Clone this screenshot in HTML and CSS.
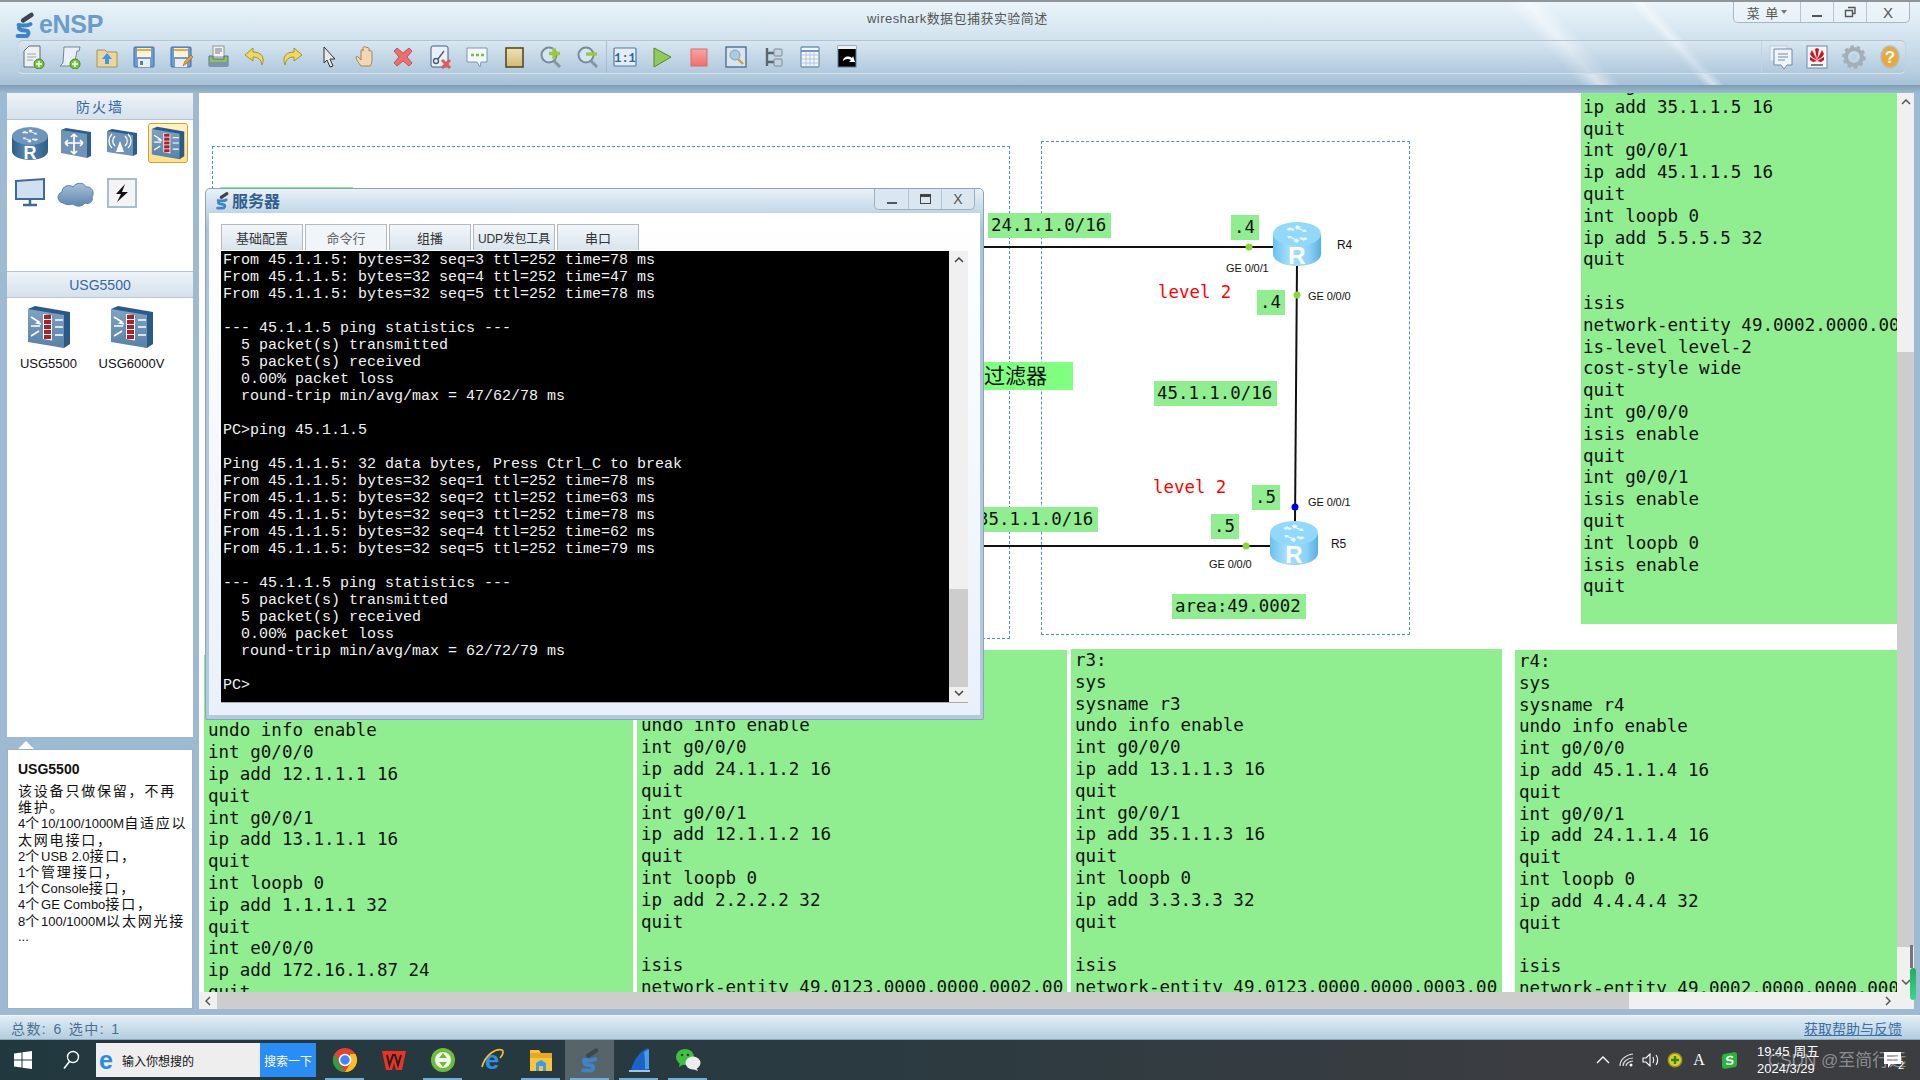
FILE: index.html
```html
<!DOCTYPE html>
<html lang="zh">
<head>
<meta charset="utf-8">
<title>eNSP</title>
<link rel="stylesheet" href="styles.css">
</head>
<body>
<svg class="defs" aria-hidden="true">
  <defs>
    <linearGradient id="gRouterLight" x1="0" x2="1" y1="0" y2="0"><stop offset="0" stop-color="#6cc0ee"/><stop offset=".35" stop-color="#a8e0fb"/><stop offset=".75" stop-color="#8ed2f6"/><stop offset="1" stop-color="#58aee4"/></linearGradient>
    <linearGradient id="gRouterDark" x1="0" x2="1" y1="0" y2="0"><stop offset="0" stop-color="#2c5c88"/><stop offset=".4" stop-color="#5a88b0"/><stop offset="1" stop-color="#2d5f8c"/></linearGradient>
    <linearGradient id="gFront" x1="0" x2="0" y1="0" y2="1"><stop offset="0" stop-color="#7fa2c2"/><stop offset="1" stop-color="#5781a8"/></linearGradient>
    <linearGradient id="gCloud" x1="0" x2="0" y1="0" y2="1"><stop offset="0" stop-color="#a8bfd8"/><stop offset="1" stop-color="#5d86b0"/></linearGradient>
    <linearGradient id="gStop" x1="0" x2="0" y1="0" y2="1"><stop offset="0" stop-color="#f9a3a3"/><stop offset="1" stop-color="#ee6f6f"/></linearGradient>
    <linearGradient id="gBook" x1="0" x2="0" y1="0" y2="1"><stop offset="0" stop-color="#efe2b4"/><stop offset="1" stop-color="#cfba78"/></linearGradient>
    <g id="arrows4"><path d="M24 3l4 2-2 1 5 2 1-1 2 3-5 0 1-1-5-2-1 1-2-3zM24 21l-4-2 2-1-5-2-1 1-2-3 5 0-1 1 5 2 1-1 2 3zM13 7l5-2 0 1 4 1-2 2-3-1-1 1zM35 17l-5 2 0-1-4-1 2-2 3 1 1-1z" fill="#fff"/></g>
    <symbol id="routerLight" viewBox="0 0 48 44">
      <path d="M0 12v20c0 7 11 12 24 12s24-5 24-12V12z" fill="url(#gRouterLight)"/>
      <ellipse cx="24" cy="12" rx="24" ry="12" fill="#92d8fb"/>
      <use href="#arrows4" opacity=".75"/>
      <text x="24" y="42" text-anchor="middle" class="svg-r">R</text>
    </symbol>
    <symbol id="routerDark" viewBox="0 0 48 44">
      <path d="M0 12v20c0 7 11 12 24 12s24-5 24-12V12z" fill="url(#gRouterDark)"/>
      <ellipse cx="24" cy="12" rx="24" ry="12" fill="#6f96ba"/>
      <use href="#arrows4" opacity=".85"/>
      <text x="24" y="42" text-anchor="middle" class="svg-r">R</text>
    </symbol>
    <symbol id="firewall" viewBox="0 0 44 44">
      <path d="M1 4l7-3 35 6v32l-6 4z" fill="#2b5a88"/>
      <path d="M1 4l36 6v33L1 37z" fill="url(#gFront)"/>
      <path d="M16 9l9 1.500v25L16 34z" fill="#fff"/>
      <path d="M17 10h7v4h-7zM17 15h7v4h-7zM17 20h7v4h-7zM17 25h7v4h-7zM17 30h7v4h-7z" fill="#a8242c"/>
      <path d="M4 12l8 5-2 1 4 1M4 21h9M4 31l8-5M28 15h8M28 22h8M28 30h8" stroke="#fff" stroke-width="1.600" fill="none"/>
    </symbol>
    <symbol id="ensp" viewBox="0 0 24 30">
      <path d="M10 10l9-6" stroke="#3d4650" stroke-width="5" stroke-linecap="round"/>
      <path d="M5 15c6 1 10 1 13-1M6 16c-2 4 2 5 6 5s5 3 2 6M4 27h8" stroke="#3d85c8" stroke-width="4.400" fill="none" stroke-linecap="round"/>
    </symbol>
  </defs>
</svg>

<div class="app">
  <header class="head">
    <div class="titlebar">
      <div class="logo"><svg class="logo-icon"><use href="#ensp"/></svg><span>eNSP</span></div>
      <div class="doc-title">wireshark数据包捕获实验简述</div>
      <div class="winctl">
        <div class="winbtn menu">菜 单<i class="caret"></i></div>
        <div class="winbtn min"><i class="dash"></i></div>
        <div class="winbtn"><svg width="12" height="12" viewBox="0 0 12 12"><path d="M4 1.500h7v6H9M1.500 4.500h7v6h-7z" fill="none" stroke="#555" stroke-width="1.400"/></svg></div>
        <div class="winbtn close">X</div>
      </div>
    </div>
    <div class="toolbars">
      <div class="tools">
        <div class="tool"><svg viewBox="0 0 24 24"><path d="M3 6l5-5h11v21H3z" fill="#eef1f4" stroke="#5c6b7c"/><path d="M6 9h9M6 12h9M6 15h6" stroke="#9aa6b2"/><circle cx="18" cy="19" r="5" fill="#7ec13c" stroke="#3f8a1c"/><path d="M18 16v6M15 19h6" stroke="#fff" stroke-width="1.400"/></svg></div>
        <div class="tool"><svg viewBox="0 0 24 24"><path d="M6 2h16l-1 4h-2l-3 15H2l3-3z" fill="#eaf0f6" stroke="#6f88a0"/><circle cx="17" cy="19" r="5" fill="#7ec13c" stroke="#3f8a1c"/><path d="M17 16v6M14 19h6" stroke="#fff" stroke-width="1.400"/></svg></div>
        <div class="tool"><svg viewBox="0 0 24 24"><path d="M2 5h8l2 2h10v15H2z" fill="#e8d7a0" stroke="#a9925a"/><path d="M12 8l5 6h-3v5h-4v-5H7z" fill="#4a94df"/></svg></div>
        <div class="tool"><svg viewBox="0 0 24 24"><rect x="2" y="2" width="20" height="20" rx="1" fill="#6f9bd0" stroke="#3e6da6"/><rect x="5" y="3" width="14" height="9" fill="#fdf3d8"/><path d="M5 5h14" stroke="#f2a83f" stroke-width="2"/><rect x="6" y="14" width="12" height="8" fill="#e8edf2"/><rect x="8" y="16" width="3" height="4" fill="#6a7a8a"/></svg></div>
        <div class="tool"><svg viewBox="0 0 24 24"><rect x="2" y="2" width="20" height="20" rx="1" fill="#6f9bd0" stroke="#3e6da6"/><rect x="5" y="3" width="14" height="9" fill="#fdf3d8"/><path d="M5 5h14" stroke="#f2a83f" stroke-width="2"/><rect x="6" y="14" width="12" height="8" fill="#e8edf2"/><path d="M14 21l2-5 6-6 2 2-6 6z" fill="#f0a030" stroke="#a05a10" stroke-width=".6"/></svg></div>
        <div class="tool"><svg viewBox="0 0 24 24"><rect x="7" y="1" width="11" height="11" fill="#f2f2ee" stroke="#8a949e"/><path d="M9 4h7M9 6h7M9 8h5" stroke="#777"/><path d="M3 11h4v3h11v-3h4v10H3z" fill="#8fc05a" stroke="#58708a"/><rect x="3" y="17" width="19" height="5" rx="1" fill="#7e94aa"/></svg></div>
        <div class="tool"><svg viewBox="0 0 24 24"><path d="M10 3L2 10l8 6v-4c5 0 8 2 9 8 3-7 0-13-9-13z" fill="#edd866" stroke="#a69224"/></svg></div>
        <div class="tool"><svg viewBox="0 0 24 24"><path d="M14 3l8 7-8 6v-4c-5 0-8 2-9 8-3-7 0-13 9-13z" fill="#edd866" stroke="#a69224"/></svg></div>
        <div class="tool"><svg viewBox="0 0 24 24"><path d="M7 2l11 12-5 0 3 7-3 1-3-7-3 3z" fill="#e8e8e8" stroke="#333"/></svg></div>
        <div class="tool"><svg viewBox="0 0 24 24"><path d="M7 21c-2-3-5-6-5-9 0-1 2-1 3 1l2 2V6c0-2 2-2 2 0V3c0-2 3-2 3 0v0c0-1 3-1 3 1v2c1-1 3 0 3 1v8c0 3-1 5-2 6z" fill="#f2d7b2" stroke="#a8825a"/></svg></div>
        <div class="tool"><svg viewBox="0 0 24 24"><path d="M6 3l6 5 6-5 3 3-5 6 5 6-3 3-6-5-6 5-3-3 5-6-5-6z" fill="#e87070" stroke="#c95050"/></svg></div>
        <div class="tool"><svg viewBox="0 0 24 24"><rect x="3" y="1" width="17" height="21" rx="2" fill="#eaf0f6" stroke="#44607e"/><circle cx="8" cy="16" r="2.500" fill="none" stroke="#44607e" stroke-width="1.400"/><path d="M10 14l6-8" stroke="#44607e" stroke-width="1.400"/><path d="M14 15l8 8M22 15l-8 8" stroke="#e05a5a" stroke-width="3"/></svg></div>
        <div class="tool"><svg viewBox="0 0 24 24"><path d="M2 3h20v14h-6l-1 5-3-5H2z" fill="#f3f7fb" stroke="#7f97ad"/><path d="M6 10h3M11 10h3M16 10h3" stroke="#7dbb3c" stroke-width="2.400"/></svg></div>
        <div class="tool"><svg viewBox="0 0 24 24"><rect x="4" y="3" width="17" height="19" fill="url(#gBook)" stroke="#5a4a20" stroke-width="1.600"/></svg></div>
        <div class="tool"><svg viewBox="0 0 24 24"><circle cx="10" cy="10" r="7.500" fill="#d4e6f6" stroke="#7a8a9a" stroke-width="2"/><path d="M15 16l6 6" stroke="#8a949e" stroke-width="3"/><path d="M15 3v11M10 8.500h11" stroke="#9cc93a" stroke-width="3.400"/></svg></div>
        <div class="tool"><svg viewBox="0 0 24 24"><circle cx="10" cy="10" r="7.500" fill="#d4e6f6" stroke="#7a8a9a" stroke-width="2"/><path d="M15 16l6 6" stroke="#8a949e" stroke-width="3"/><path d="M10 9h11" stroke="#9cc93a" stroke-width="3.400"/></svg></div>
        <div class="tb-sep"></div>
        <div class="tool"><svg viewBox="0 0 24 24"><rect x="1" y="3" width="22" height="18" rx="1" fill="#e4edf6" stroke="#4f7cab" stroke-width="1.200"/><text x="12" y="17" text-anchor="middle" class="svg-ratio">1:1</text></svg></div>
        <div class="tool"><svg viewBox="0 0 24 24"><path d="M4 3l17 9L4 22z" fill="#93c95c" stroke="#4f8a2a"/></svg></div>
        <div class="tool"><svg viewBox="0 0 24 24"><rect x="4" y="4" width="16" height="17" fill="url(#gStop)" stroke="#d86a6a"/></svg></div>
        <div class="tool"><svg viewBox="0 0 24 24"><rect x="2" y="2" width="20" height="20" fill="#dbe5ef" stroke="#50708f" stroke-width="1.400"/><circle cx="11" cy="10" r="5" fill="#a9cbe6" stroke="#8aa0b4"/><path d="M14 14l5 5" stroke="#c9a04a" stroke-width="2.400"/></svg></div>
        <div class="tool"><svg viewBox="0 0 24 24"><path d="M6 3v18M6 8h7M6 17h7" stroke="#5c6670" stroke-width="2.400" fill="none"/><rect x="13" y="4" width="8" height="7" rx="1" fill="#c8d2dc" stroke="#7a8a9a"/><rect x="13" y="14" width="8" height="7" rx="1" fill="#c8d2dc" stroke="#7a8a9a"/></svg></div>
        <div class="tool"><svg viewBox="0 0 24 24"><rect x="3" y="2" width="18" height="20" rx="1" fill="#f2f6fa" stroke="#6f94bb" stroke-width="1.300"/><path d="M3 6h18" stroke="#6f94bb" stroke-width="2"/><path d="M3 10h18M3 14h18M3 18h18M8 6v16M12 6v16M16 6v16" stroke="#a6bdd4" stroke-width=".8"/></svg></div>
        <div class="tool"><svg viewBox="0 0 24 24"><rect x="3" y="1" width="18" height="21" fill="#000" stroke="#5a7ea3"/><path d="M3 1h18v3H3z" fill="#eee"/><path d="M8 16c0-4 5-6 9-3l1-2 2 6-6 0 2-2c-3-2-6-1-8 1z" fill="#fff"/></svg></div>
      </div>
      <div class="tools-right">
        <div class="tool"><svg viewBox="0 0 24 24"><rect x="1" y="1" width="17" height="15" fill="#e8eff6" stroke="#c0cedb"/><path d="M5 4h18v16h-5l-3 4-3-4H5z" fill="#f0f5fa" stroke="#6e8aa6"/><path d="M9 9h10M9 12h10M9 15h7" stroke="#6e8aa6"/></svg></div>
        <div class="tool"><svg viewBox="0 0 24 24"><rect x="2" y="1" width="20" height="22" fill="#f4f6f8" stroke="#6e8aa6"/><path d="M12 15L7 5l-2 4 2 3zM12 15l-2-11 2-1 2 1zM12 15l5-10 2 4-2 3zM12 16l-7-4v3l3 2zM12 16l7-4v3l-3 2z" fill="#d4121e"/><path d="M6 20h12" stroke="#555" stroke-width="1.500"/></svg></div>
        <div class="tool"><svg viewBox="0 0 24 24"><circle cx="12" cy="12" r="8" fill="none" stroke="#a4aeb8" stroke-width="4"/><circle cx="12" cy="12" r="10.500" fill="none" stroke="#a4aeb8" stroke-width="2.500" stroke-dasharray="3.500 3"/><circle cx="12" cy="12" r="3" fill="#bcd2e4"/></svg></div>
        <div class="tool"><svg viewBox="0 0 24 24"><ellipse cx="12" cy="12" rx="9" ry="11" fill="#e8a83a" stroke="#b8bcc0" stroke-width="1.500"/><text x="12" y="18" text-anchor="middle" class="svg-help">?</text></svg></div>
      </div>
    </div>
  </header>

  <main class="workspace">
    <aside class="side">
      <section class="palette">
        <h2 class="pal-head cjk-head">防火墙</h2>
        <div class="pal-grid">
          <div class="pal-item"><svg class="ico-router"><use href="#routerDark"/></svg></div>
          <div class="pal-item"><svg class="ico-box" viewBox="0 0 32 32"><path d="M1 3l5-2 25 4v24l-4 2z" fill="#2d5e8c"/><path d="M1 3l26 4v24L1 26z" fill="#6f94b8"/><path d="M14 7v20M5 16h18M14 7l-3 3M14 7l3 3M14 27l-3-3M14 27l3-3M5 16l3-3M5 16l3 3M23 16l-3-3M23 16l-3 3" stroke="#fff" stroke-width="1.700" fill="none"/></svg></div>
          <div class="pal-item"><svg class="ico-box" viewBox="0 0 32 32"><path d="M1 4l5-2 25 4v21l-4 2z" fill="#2d5e8c"/><path d="M1 4l26 4v21L1 25z" fill="#6f94b8"/><path d="M14 14l-4 11h8z" fill="#fff"/><path d="M9 9c-3 3-3 7 0 10M19 9c3 3 3 7 0 10M6 7c-4 4-4 10 0 14M22 7c4 4 4 10 0 14" stroke="#fff" stroke-width="1.300" fill="none"/></svg></div>
          <div class="pal-item selected"><svg class="ico-fw-sm"><use href="#firewall"/></svg></div>
          <div class="pal-item"><svg class="ico-box" viewBox="0 0 32 32"><path d="M2 4l28-2v20H2z" fill="#cfe0f0" stroke="#3f6a94" stroke-width="2"/><path d="M16 22v5M9 28h14" stroke="#3f6a94" stroke-width="2.500"/></svg></div>
          <div class="pal-item"><svg class="ico-cloud" viewBox="0 0 38 30"><path d="M6 25c-6-1-7-9-1-11 0-6 7-8 11-5 3-5 11-5 13 0 6-1 9 6 6 10 2 4-3 8-7 6-3 4-9 4-12 1-3 1-7 1-10-1z" fill="url(#gCloud)" stroke="#5d86b0"/></svg></div>
          <div class="pal-item"><svg class="ico-bolt" viewBox="0 0 30 30"><rect x="1" y="1" width="28" height="28" fill="#f2f4f6" stroke="#a7bdd0" stroke-width="2"/><path d="M18 6l-9 10h5l-4 8 11-10h-6z" fill="#111"/></svg></div>
        </div>
        <h2 class="pal-head latin-head">USG5500</h2>
        <div class="devices">
          <div class="device"><svg class="ico-fw"><use href="#firewall"/></svg><span>USG5500</span></div>
          <div class="device"><svg class="ico-fw"><use href="#firewall"/></svg><span>USG6000V</span></div>
        </div>
      </section>
      <section class="info">
        <h3>USG5500</h3>
        <p><span class="c">该设备只做保留，不再</span></p>
        <p><span class="c">维护。</span></p>
        <p>4<span class="c">个</span>10/100/1000M<span class="c">自适应以</span></p>
        <p><span class="c">太网电接口，</span></p>
        <p>2<span class="c">个</span>USB 2.0<span class="c">接口，</span></p>
        <p>1<span class="c">个管理接口，</span></p>
        <p>1<span class="c">个</span>Console<span class="c">接口，</span></p>
        <p>4<span class="c">个</span>GE Combo<span class="c">接口，</span></p>
        <p>8<span class="c">个</span>100/1000M<span class="c">以太网光接</span></p>
        <p>...</p>
      </section>
    </aside>

    <section class="canvas">
      <div class="scene">
        <div class="area area-left"></div>
        <div class="area area-right"></div>
        <div class="note stub"></div>

        <svg class="links" viewBox="0 0 1715 899">
          <path d="M700 154H1098" class="link"/>
          <path d="M700 453H1090" class="link"/>
          <path d="M1098 170L1096 430" class="link"/>
          <circle cx="1050" cy="154" r="3.500" fill="#8cd63a"/>
          <circle cx="1098" cy="202" r="3.500" fill="#8cd63a"/>
          <circle cx="1096" cy="414" r="3.500" fill="#0000e8"/>
          <circle cx="1047" cy="453" r="3.500" fill="#8cd63a"/>
        </svg>
        <svg class="node r4"><use href="#routerLight"/></svg>
        <svg class="node r5"><use href="#routerLight"/></svg>

        <span class="port p1">GE 0/0/1</span>
        <span class="port p2">GE 0/0/0</span>
        <span class="port p3">GE 0/0/1</span>
        <span class="port p4">GE 0/0/0</span>
        <span class="port name n4">R4</span>
        <span class="port name n5">R5</span>

        <div class="note t-241">24.1.1.0/16</div>
        <div class="note t-d4a">.4</div>
        <div class="note t-d4b">.4</div>
        <div class="note t-451">45.1.1.0/16</div>
        <div class="note t-351">35.1.1.0/16</div>
        <div class="note t-d5a">.5</div>
        <div class="note t-d5b">.5</div>
        <div class="note t-area">area:49.0002</div>
        <div class="note t-filter">过滤器</div>
        <div class="lvl l1">level 2</div>
        <div class="lvl l2">level 2</div>

        <pre class="cfg cfg-r1">r1:
sys
sysname r1
undo info enable
int g0/0/0
ip add 12.1.1.1 16
quit
int g0/0/1
ip add 13.1.1.1 16
quit
int loopb 0
ip add 1.1.1.1 32
quit
int e0/0/0
ip add 172.16.1.87 24
quit</pre>
        <pre class="cfg cfg-r2">r2:
sys
sysname r2
undo info enable
int g0/0/0
ip add 24.1.1.2 16
quit
int g0/0/1
ip add 12.1.1.2 16
quit
int loopb 0
ip add 2.2.2.2 32
quit

isis
network-entity 49.0123.0000.0000.0002.00</pre>
        <pre class="cfg cfg-r3">r3:
sys
sysname r3
undo info enable
int g0/0/0
ip add 13.1.1.3 16
quit
int g0/0/1
ip add 35.1.1.3 16
quit
int loopb 0
ip add 3.3.3.3 32
quit

isis
network-entity 49.0123.0000.0000.0003.00</pre>
        <pre class="cfg cfg-r4">r4:
sys
sysname r4
undo info enable
int g0/0/0
ip add 45.1.1.4 16
quit
int g0/0/1
ip add 24.1.1.4 16
quit
int loopb 0
ip add 4.4.4.4 32
quit

isis
network-entity 49.0002.0000.0000.0004.00</pre>
        <pre class="cfg cfg-r5">int g0/0/0
ip add 35.1.1.5 16
quit
int g0/0/1
ip add 45.1.1.5 16
quit
int loopb 0
ip add 5.5.5.5 32
quit

isis
network-entity 49.0002.0000.0000.0005.00
is-level level-2
cost-style wide
quit
int g0/0/0
isis enable
quit
int g0/0/1
isis enable
quit
int loopb 0
isis enable
quit</pre>

        <div class="dialog">
          <div class="dlg-title">
            <svg class="dlg-icon"><use href="#ensp"/></svg>
            <span class="dlg-name">服务器</span>
            <div class="dlg-ctl">
              <div class="dlg-btn"><i class="dash"></i></div>
              <div class="dlg-btn"><i class="maxi"></i></div>
              <div class="dlg-btn">X</div>
            </div>
          </div>
          <div class="dlg-body">
            <div class="tabs">
              <div class="tab">基础配置</div>
              <div class="tab active">命令行</div>
              <div class="tab">组播</div>
              <div class="tab udp">UDP发包工具</div>
              <div class="tab">串口</div>
            </div>
            <div class="term">
<pre class="term-text">From 45.1.1.5: bytes=32 seq=3 ttl=252 time=78 ms
From 45.1.1.5: bytes=32 seq=4 ttl=252 time=47 ms
From 45.1.1.5: bytes=32 seq=5 ttl=252 time=78 ms

--- 45.1.1.5 ping statistics ---
  5 packet(s) transmitted
  5 packet(s) received
  0.00% packet loss
  round-trip min/avg/max = 47/62/78 ms

PC&gt;ping 45.1.1.5

Ping 45.1.1.5: 32 data bytes, Press Ctrl_C to break
From 45.1.1.5: bytes=32 seq=1 ttl=252 time=78 ms
From 45.1.1.5: bytes=32 seq=2 ttl=252 time=63 ms
From 45.1.1.5: bytes=32 seq=3 ttl=252 time=78 ms
From 45.1.1.5: bytes=32 seq=4 ttl=252 time=62 ms
From 45.1.1.5: bytes=32 seq=5 ttl=252 time=79 ms

--- 45.1.1.5 ping statistics ---
  5 packet(s) transmitted
  5 packet(s) received
  0.00% packet loss
  round-trip min/avg/max = 62/72/79 ms

PC&gt;</pre>
              <div class="term-scroll">
                <svg class="arr" viewBox="0 0 10 6"><path d="M1 5l4-4 4 4" fill="none" stroke="#444" stroke-width="1.500"/></svg>
                <div class="term-track"><div class="term-thumb"></div></div>
                <svg class="arr" viewBox="0 0 10 6"><path d="M1 1l4 4 4-4" fill="none" stroke="#444" stroke-width="1.500"/></svg>
              </div>
            </div>
          </div>
        </div>
      </div>
      <div class="vscroll">
        <svg class="arr" viewBox="0 0 10 6"><path d="M1 5l4-4 4 4" fill="none" stroke="#555" stroke-width="1.500"/></svg>
        <div class="vthumb"></div>
        <svg class="arr" viewBox="0 0 10 6"><path d="M1 1l4 4 4-4" fill="none" stroke="#555" stroke-width="1.500"/></svg>
        <i class="vmark-dark"></i>
        <i class="vmark-green"></i>
      </div>
      <div class="hscroll">
        <svg class="arr-h" viewBox="0 0 6 10"><path d="M5 1L1 5l4 4" fill="none" stroke="#555" stroke-width="1.500"/></svg>
        <div class="hthumb"></div>
        <svg class="arr-h" viewBox="0 0 6 10"><path d="M1 1l4 4-4 4" fill="none" stroke="#555" stroke-width="1.500"/></svg>
      </div>
    </section>
  </main>

  <footer class="status">
    <span class="counts">总数: 6 选中: 1</span>
    <a class="help">获取帮助与反馈</a>
  </footer>
</div>

<div class="taskbar">
  <div class="tb-start"><svg width="18" height="18" viewBox="0 0 18 18"><path d="M0 2.500l7.500-1v7H0zM8.500 1.300L18 0v8.500H8.500zM0 9.500h7.500v7l-7.500-1zM8.500 9.500H18V18l-9.500-1.300z" fill="#fff"/></svg></div>
  <div class="tb-find"><svg width="18" height="20" viewBox="0 0 18 20"><circle cx="11" cy="7" r="5.500" fill="none" stroke="#fff" stroke-width="1.400"/><path d="M7.500 11.500L2 18.500" stroke="#fff" stroke-width="1.600"/></svg></div>
  <div class="search-box"><span class="ie-e">e</span><span>输入你想搜的</span></div>
  <div class="search-btn">搜索一下</div>
  <div class="apps">
    <div class="app-ico running"><svg viewBox="0 0 26 26"><circle cx="13" cy="13" r="12" fill="#e34234"/><path d="M2.600 7L8 18l5 7a12 12 0 0 1-10.400-18z" fill="#2f9e44"/><path d="M23.400 7a12 12 0 0 1-10.400 18l5-8 0-10z" fill="#f6c026"/><circle cx="13" cy="13" r="5.500" fill="#4285f4" stroke="#fff" stroke-width="1.500"/></svg></div>
    <div class="app-ico"><svg viewBox="0 0 26 26"><path d="M1 4h24l-4 19h-6l-2-7-2 7H5z" fill="#ea3323"/><path d="M6 8l2.500 10L12 8h2l3 10 3-10" fill="none" stroke="#222" stroke-width="2"/></svg></div>
    <div class="app-ico running"><svg viewBox="0 0 26 26"><circle cx="13" cy="13" r="12" fill="#6fbe3a"/><circle cx="13" cy="13" r="8" fill="#f4f8ec"/><path d="M9 11h8l-4-5zM9 15h8l-4 5z" fill="#6fbe3a"/></svg></div>
    <div class="app-ico"><svg viewBox="0 0 26 26"><text x="13" y="22" text-anchor="middle" class="svg-ie">e</text><path d="M3 20C6 8 17 1 23 3c2 1 1 5-2 8" fill="none" stroke="#f2c230" stroke-width="1.600"/></svg></div>
    <div class="app-ico running"><svg viewBox="0 0 26 26"><path d="M2 3h9l2 3h11v18H2z" fill="#f5c542"/><path d="M2 6h22v5H2z" fill="#e8a820"/><path d="M8 24v-8l5-3 5 3v8z" fill="#3f9be8"/><rect x="11" y="19" width="4" height="5" fill="#f5c542"/></svg></div>
    <div class="app-ico active"><svg viewBox="0 0 24 30"><use href="#ensp"/></svg></div>
    <div class="app-ico running"><svg viewBox="0 0 26 26"><path d="M5 23C8 12 14 4 22 1c1 8 1 15 1 22z" fill="#1b63c6"/><path d="M3 23h21v2H3z" fill="#9cc3e8"/><path d="M18 5c1 6 1 12 1 17h4V2z" fill="#4b9be8"/></svg></div>
    <div class="app-ico running"><svg viewBox="0 0 26 26"><ellipse cx="10" cy="10" rx="9" ry="8" fill="#3fc03f"/><path d="M5 15l-1 5 5-3z" fill="#3fc03f"/><ellipse cx="18" cy="16" rx="7.500" ry="6.500" fill="#ededed"/><path d="M21 20l2 4-5-2z" fill="#ededed"/><circle cx="7" cy="8" r="1.200" fill="#234"/><circle cx="13" cy="8" r="1.200" fill="#234"/></svg></div>
  </div>
  <div class="tray">
    <div class="tray-i"><svg width="14" height="10" viewBox="0 0 14 10"><path d="M1 8l6-6 6 6" fill="none" stroke="#fff" stroke-width="1.300"/></svg></div>
    <div class="tray-i"><svg width="16" height="14" viewBox="0 0 16 14"><path d="M1 13C1 7 6 2 14 1M4 13C4 9 8 5 14 5M7 13c0-2 3-5 7-5" fill="none" stroke="#ddd" stroke-width="1.200"/><circle cx="12" cy="12" r="1.500" fill="#fff"/></svg></div>
    <div class="tray-i"><svg width="18" height="14" viewBox="0 0 18 14"><path d="M1 5h3l4-4v12l-4-4H1z" fill="none" stroke="#fff" stroke-width="1.100"/><path d="M11 4c1 2 1 4 0 6M14 2c2 3 2 7 0 10" fill="none" stroke="#fff" stroke-width="1.100"/></svg></div>
    <div class="tray-i"><svg width="16" height="16" viewBox="0 0 16 16"><circle cx="8" cy="8" r="7.500" fill="#8a9a20"/><circle cx="8" cy="8" r="6" fill="#f3c71e"/><path d="M8 4v8M4 8h8" stroke="#1f8a2a" stroke-width="2.400"/></svg></div>
    <div class="tray-i tray-a">A</div>
    <div class="tray-i tray-s"><span>S</span></div>
  </div>
  <div class="clock"><div>19:45 周五</div><div>2024/3/29</div></div>
  <div class="notif"><svg width="18" height="16" viewBox="0 0 18 16"><path d="M0 0h17v12H7l-3 4v-4H0z" fill="#fff"/><path d="M3 4h11M3 8h11" stroke="#555"/></svg><span class="badge">2</span></div>
  <div class="watermark">CSDN @至简行远</div>
</div>
</body>
</html>
```

FILE: styles.css
```css
* { box-sizing: border-box; }
html, body { margin: 0; height: 100%; overflow: hidden; }
body { width: 1920px; height: 1080px; font-family: "Liberation Sans", "Noto Sans CJK SC", sans-serif; background: #2a3a40; }
.defs { position: absolute; width: 0; height: 0; }
.svg-r { font: 700 24px "Liberation Sans", sans-serif; fill: #fff; }
.svg-ratio { font: 700 12px "Liberation Mono", monospace; fill: #2f6aa3; }
.svg-help { font: 700 17px "Liberation Sans", sans-serif; fill: #fff; }
.svg-ie { font: 700 26px "Liberation Sans", sans-serif; fill: #2f8fe0; }

.app { height: 1040px; display: flex; flex-direction: column; background: #9fbad2; }

/* header */
.head { height: 85px; position: relative; overflow: hidden; background: linear-gradient(#eaf4f9 0%, #d5e5f0 38%, #b7cee0 85%, #a6c0d6 100%); border-top: 2px solid #8e959b; flex: none; }
.head::before, .head::after { content: ""; position: absolute; top: 0; height: 90px; transform: skewX(42deg); transform-origin: top; background: linear-gradient(90deg, rgba(255,255,255,0), rgba(255,255,255,.5), rgba(255,255,255,0)); }
.head::before { left: 1505px; width: 42px; }
.head::after { left: 1628px; width: 22px; }
.titlebar { height: 36px; display: flex; align-items: flex-start; position: relative; z-index: 1; }
.logo { display: flex; align-items: center; width: 300px; padding: 9px 0 0 14px; color: #6c9cc9; font-weight: 700; font-size: 25px; letter-spacing: -.3px; height: 36px; }
.logo-icon { width: 22px; height: 28px; margin-right: 3px; }
.doc-title { position: absolute; left: 867px; top: 9px; font-size: 13px; color: #555; line-height: 16px; letter-spacing: .45px; }
.winctl { margin-left: auto; margin-right: 10px; display: flex; height: 21px; border: 1px solid #a8b6c2; border-top: 0; border-radius: 0 0 5px 5px; background: rgba(240,246,250,.55); }
.winbtn { width: 33px; display: flex; align-items: center; justify-content: center; font-size: 13px; color: #555; border-left: 1px solid #b8c6d2; }
.winbtn.menu { width: 66px; border-left: 0; letter-spacing: 1px; }
.winbtn.close { width: 43px; font-size: 15px; }
.caret { width: 0; height: 0; border: 3px solid transparent; border-top: 4px solid #777; border-bottom: 0; margin-left: 2px; }
.dash { display: block; width: 10px; height: 2px; background: #555; margin-top: 8px; }
.toolbars { display: flex; height: 34px; margin: 2px 14px 0 17px; position: relative; z-index: 1; border: 1px solid #c3d4e1; border-top-color: #b4c4d2; border-bottom-color: #d6e2ec; border-radius: 6px; background: linear-gradient(rgba(235,243,248,.35), rgba(170,195,218,.45)); }
.tools { display: flex; align-items: center; gap: 7px; flex: 1; }
.tool { width: 30px; height: 26px; display: flex; align-items: center; justify-content: center; }
.tool svg { width: 24px; height: 24px; }
.tb-sep { width: 1px; height: 32px; margin: 0 -4px; background: #a9bccd; }
.tools-right { width: 144px; display: flex; align-items: center; gap: 7px; padding-left: 4px; border-left: 1px solid #c3d4e1; }

/* workspace */
.workspace { height: 930px; flex: none; display: flex; gap: 6px; padding: 8px 6px 6px 7px; background: linear-gradient(#7f9cb6 0, #9dbad2 8px); }
.side { width: 186px; flex: none; display: flex; flex-direction: column; gap: 12px; position: relative; }
.palette { height: 644px; background: #fff; }
.pal-head { margin: 0; height: 27px; display: flex; align-items: center; justify-content: center; font-weight: 400; color: #3568a0; background: linear-gradient(#eef3f8, #d5e1ec); border-bottom: 1px solid #b4c4d2; }
.cjk-head { font-size: 14px; letter-spacing: 2px; }
.latin-head { font-size: 14px; border-top: 1px solid #b4c4d2; }
.pal-grid { height: 151px; display: grid; grid-template-columns: repeat(4, 46px); grid-auto-rows: 40px; row-gap: 10px; padding-top: 3px; align-content: start; }
.pal-item { width: 40px; height: 40px; justify-self: center; display: flex; align-items: center; justify-content: center; border: 1px solid transparent; border-radius: 3px; }
.pal-item.selected { background: linear-gradient(#fff4c8, #ffe08a); border-color: #d6a030; }
.ico-router { width: 36px; height: 33px; }
.ico-box { width: 32px; height: 32px; }
.ico-cloud { width: 38px; height: 30px; }
.ico-bolt { width: 30px; height: 30px; }
.ico-fw-sm { width: 34px; height: 34px; }
.ico-fw { width: 44px; height: 44px; }
.devices { display: flex; padding-top: 7px; }
.device { width: 83px; display: flex; flex-direction: column; align-items: center; font-size: 13px; color: #111; gap: 7px; }
.info { flex: 1; background: #fff; padding: 10px 4px 0 10px; position: relative; border: 1px solid #9fb2c3; }
.info::before { content: ""; position: absolute; left: 10px; top: -9px; width: 0; height: 0; border: 8px solid transparent; border-bottom: 8px solid #fff; border-top: 0; }
.info h3 { margin: 0 0 5px; font-size: 14px; line-height: 18px; font-weight: 700; color: #111; }
.info p { margin: 0; font-size: 13px; line-height: 16px; height: 16.200px; color: #111; white-space: nowrap; }
.c { font-size: 14px; letter-spacing: 1.800px; }

/* canvas */
.canvas { flex: 1; display: grid; grid-template-columns: 1fr 17px; grid-template-rows: 1fr 17px; background: #fff; }
.scene { position: relative; overflow: hidden; background: #fff; }
.area { position: absolute; border: 1px dashed #4a90e2; }
.area-left { left: 13px; top: 53px; width: 798px; height: 493px; }
.area-right { left: 842px; top: 48px; width: 369px; height: 494px; }
.links { position: absolute; left: 0; top: 0; width: 1715px; height: 899px; }
.link { stroke: #111; stroke-width: 2; fill: none; }
.node { position: absolute; width: 48px; height: 44px; }
.r4 { left: 1074px; top: 129px; }
.r5 { left: 1071px; top: 428px; }
.port { position: absolute; font-size: 11px; line-height: 14px; color: #111; letter-spacing: -.1px; white-space: nowrap; }
.p1 { left: 1027px; top: 168px; }
.p2 { left: 1109px; top: 196px; }
.p3 { left: 1109px; top: 402px; }
.p4 { left: 1010px; top: 464px; }
.name { font-size: 12px; }
.n4 { left: 1138px; top: 145px; }
.n5 { left: 1132px; top: 444px; }
.note { position: absolute; height: 25px; line-height: 24px; padding-left: 3px; background: #90ee90; font: 17.400px/24px "DejaVu Sans Mono", monospace; color: #111; white-space: nowrap; }
.stub { left: 21px; top: 94px; width: 133px; height: 3px; }
.t-241 { left: 789px; top: 120px; width: 123px; }
.t-d4a { left: 1032px; top: 122px; width: 28px; }
.t-d4b { left: 1058px; top: 197px; width: 28px; }
.t-451 { left: 955px; top: 288px; width: 123px; }
.t-351 { left: 776px; top: 414px; width: 123px; }
.t-d5a { left: 1053px; top: 392px; width: 28px; }
.t-d5b { left: 1012px; top: 421px; width: 28px; }
.t-area { left: 973px; top: 501px; width: 134px; }
.t-filter { left: 770px; top: 269px; width: 104px; height: 28px; padding-left: 15px; background: #80ff80; font: 21px/24px "Noto Sans CJK SC", sans-serif; }
.lvl { position: absolute; font: 17.400px/22px "DejaVu Sans Mono", monospace; color: #f00; white-space: nowrap; }
.l1 { left: 959px; top: 188px; }
.l2 { left: 954px; top: 383px; }
.cfg { position: absolute; margin: 0; overflow: hidden; background: #90ee90; color: #111; font: 17.550px/21.800px "DejaVu Sans Mono", monospace; white-space: pre; padding-left: 4px; }
.cfg-r1 { left: 5px; top: 562px; width: 429px; height: 400px; }
.cfg-r2 { left: 438px; top: 557px; width: 430px; height: 400px; }
.cfg-r3 { left: 872px; top: 556px; width: 431px; height: 400px; padding-top: 1px; }
.cfg-r4 { left: 1316px; top: 557px; width: 382px; height: 400px; padding-top: 1px; }
.cfg-r5 { left: 1382px; top: -18px; width: 316px; height: 549px; padding-left: 2px; }

/* dialog */
.dialog { position: absolute; left: 6px; top: 95px; width: 779px; height: 532px; display: flex; flex-direction: column; padding: 0 3px 4px; background: linear-gradient(#e8f1f8, #a9c3da 40px, #b3cbe0); border: 1px solid #8ea3b5; border-radius: 5px 5px 2px 2px; }
.dlg-title { height: 24px; display: flex; align-items: center; flex: none; }
.dlg-icon { width: 15px; height: 19px; margin: 0 2px 2px 6px; }
.dlg-name { font-size: 16px; color: #2f5f90; font-weight: 700; margin-bottom: 2px; }
.dlg-ctl { margin-left: auto; margin-right: 5px; align-self: flex-start; display: flex; height: 21px; border: 1px solid #9db0c0; border-top: 0; border-radius: 0 0 5px 5px; background: #dbe7f0; }
.dlg-btn { width: 33px; display: flex; align-items: center; justify-content: center; font-size: 14px; color: #555; border-left: 1px solid #b4c4d2; }
.dlg-btn:first-child { border-left: 0; }
.maxi { width: 11px; height: 10px; border: 1px solid #444; border-top-width: 3px; }
.dlg-body { flex: 1; background: linear-gradient(#fff, #eaf0fb); padding: 11px 12px 0 12px; display: flex; flex-direction: column; }
.tabs { display: flex; gap: 2px; height: 26px; flex: none; }
.tab { width: 82px; display: flex; align-items: center; justify-content: center; font-size: 13px; color: #333; background: linear-gradient(#f2f6fa, #d9e4ee); border: 1px solid #b4b9bd; border-bottom: 0; padding-bottom: 1px; }
.tab.active { background: #f0f5f9; color: #666; }
.tab.udp { font-size: 12px; letter-spacing: -.2px; }
.term { flex: none; height: 452px; margin-top: 1px; display: flex; background: #000; border-bottom: 1px solid #aaa; }
.term-text { flex: 1; margin: 0; padding: 1px 0 0 2px; color: #f2f2f2; font: 15px/17px "Liberation Mono", monospace; overflow: hidden; }
.term-scroll { width: 19px; display: flex; flex-direction: column; align-items: center; background: #f0f0f0; }
.term-track { flex: 1; width: 100%; display: flex; flex-direction: column; justify-content: flex-end; }
.term-thumb { height: 98px; background: #cdcdcd; margin-bottom: -3px; }
.arr { width: 10px; height: 6px; margin: 6px 0; flex: none; }
.arr-h { width: 6px; height: 10px; margin: 0 6px; flex: none; }

.vscroll { grid-row: 1 / 3; grid-column: 2; position: relative; display: flex; flex-direction: column; align-items: center; background: #f0f0f0; }
.vthumb { width: 100%; height: 595px; margin-top: 241px; background: #cdcdcd; }
.vthumb + .arr { margin-top: auto; margin-bottom: 24px; }
.vmark-dark { position: absolute; left: 13px; top: 852px; width: 3px; height: 23px; background: #777; }
.vmark-green { position: absolute; left: 13px; top: 875px; width: 6px; height: 32px; border-radius: 3px; background: linear-gradient(#1fae5c, #39d98a); }
.hscroll { grid-row: 2; grid-column: 1; display: flex; align-items: center; background: #f0f0f0; }
.hthumb { width: 1412px; height: 100%; background: #cdcdcd; margin-right: auto; }

/* status */
.status { flex: 1; display: flex; align-items: center; justify-content: space-between; padding: 0 18px 0 11px; background: linear-gradient(#e1edf5, #b3cde0); border-top: 1px solid #f0f6fa; border-bottom: 1px solid #8fa5b6; font-size: 14px; }
.counts { color: #4a6f92; letter-spacing: 1.400px; word-spacing: 1px; }
.help { color: #3a6ea5; text-decoration: underline; }

/* taskbar */
.taskbar { height: 40px; position: relative; display: flex; align-items: center; background: linear-gradient(90deg, #22383f, #2a3a40 45%, #3b3d41 80%); color: #fff; }
.tb-start { width: 46px; display: flex; justify-content: center; }
.tb-find { width: 50px; display: flex; justify-content: center; }
.search-box { width: 164px; height: 34px; display: flex; align-items: center; gap: 6px; padding-left: 3px; background: #eee; color: #111; font-size: 12px; }
.ie-e { font: 700 25px/28px "Liberation Sans", sans-serif; color: #2a8ce0; width: 17px; }
.search-btn { width: 56px; height: 34px; display: flex; align-items: center; justify-content: center; background: #2a8cf5; font-size: 12px; color: #fff; }
.apps { display: flex; margin-left: 4px; height: 40px; }
.app-ico { width: 49px; height: 40px; display: flex; align-items: center; justify-content: center; position: relative; }
.app-ico svg { width: 26px; height: 26px; }
.app-ico.active { background: rgba(255,255,255,.22); }
.app-ico.running::after, .app-ico.active::after { content: ""; position: absolute; left: 5px; right: 5px; bottom: 0; height: 2px; background: #6fb0dc; }
.tray { display: flex; align-items: center; margin-left: auto; }
.tray-i { width: 24px; display: flex; justify-content: center; font-size: 16px; color: #fff; }
.tray-a { font-family: "Liberation Serif", serif; }
.tray-s { margin-left: 6px; }
.tray-s span { display: block; width: 15px; height: 15px; background: #27b53a; border-radius: 3px; text-align: center; font: 700 13px/15px "Liberation Sans", sans-serif; transform: skewY(-8deg); }
.clock { width: 60px; margin: 0 0 0 16px; font-size: 13px; line-height: 17px; white-space: nowrap; color: #fff; }
.notif { width: 46px; margin-left: 53px; margin-right: 4px; display: flex; justify-content: center; position: relative; }
.badge { position: absolute; left: 28px; top: 7px; font-size: 11px; }
.watermark { position: absolute; left: 1768px; top: 10px; font-size: 17px; line-height: 22px; color: rgba(255,255,255,.42); white-space: nowrap; }
```
